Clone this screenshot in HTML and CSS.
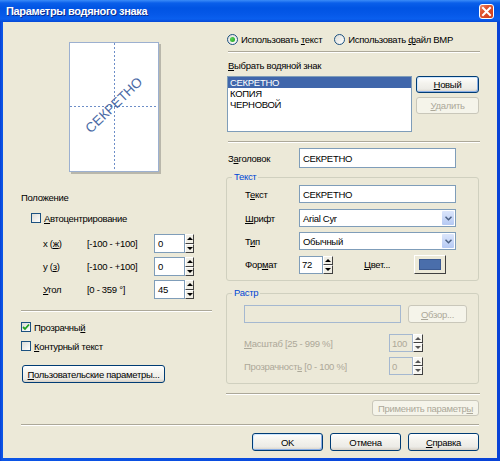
FILE: index.html
```html
<!DOCTYPE html>
<html lang="ru">
<head>
  <meta charset="UTF-8">
  <title>Параметры водяного знака</title>
  <link rel="stylesheet" href="styles.css">
</head>
<body>
  <div class="window">
    <div class="titlebar">
      <span class="title">Параметры водяного знака</span>
      <span class="close">
        <svg width="13" height="13" viewBox="0 0 13 13"><path d="M3 3 L10 10 M10 3 L3 10" stroke="#fff" stroke-width="2" stroke-linecap="square"/></svg>
      </span>
    </div>
    <div class="client">
      <div class="main">
        <div class="left">
          <div class="preview">
            <span class="preview-text">СЕКРЕТНО</span>
          </div>
          <div class="caption">Положение</div>
          <div class="check-row indent"><span class="check"></span><span><u>А</u>втоцентрирование</span></div>
          <div class="field">
            <span>x (<u>ж</u>)</span><span>[-100 - +100]</span>
            <div class="edit">0</div><div class="spin"><span class="up"></span><span class="down"></span></div>
          </div>
          <div class="field">
            <span>y (<u>з</u>)</span><span>[-100 - +100]</span>
            <div class="edit">0</div><div class="spin"><span class="up"></span><span class="down"></span></div>
          </div>
          <div class="field">
            <span><u>У</u>гол</span><span>[0 - 359 °]</span>
            <div class="edit">45</div><div class="spin"><span class="up"></span><span class="down"></span></div>
          </div>
          <div class="sep sep-left"></div>
          <div class="check-row first"><span class="check checked"><svg width="8" height="8" viewBox="0 0 8 8"><path d="M1 4 L3 6 L7 1.5" fill="none" stroke="#21a121" stroke-width="1.8"/></svg></span><span>Прозрачны<u>й</u></span></div>
          <div class="check-row second"><span class="check"></span><span><u>К</u>онтурный текст</span></div>
          <div class="btn btn-custom"><span><u>П</u>ользовательские параметры...</span></div>
        </div>

        <div class="right">
          <div class="radio-row">
            <span class="radio selected"></span><span class="radio-label">Использовать <u>т</u>екст</span>
            <span class="radio"></span><span class="radio-label">Использовать <u>ф</u>айл BMP</span>
          </div>
          <div class="sep sep-right sep-top"></div>
          <div class="list-label"><u>В</u>ыбрать водяной знак</div>
          <div class="list-row">
            <div class="listbox">
              <div class="item active">СЕКРЕТНО</div>
              <div class="item">КОПИЯ</div>
              <div class="item">ЧЕРНОВОЙ</div>
            </div>
            <div class="list-buttons">
              <div class="btn default"><span><u>Н</u>овый</span></div>
              <div class="btn disabled"><span><u>У</u>далить</span></div>
            </div>
          </div>
          <div class="sep sep-right sep-list"></div>
          <div class="row header-row">
            <span class="row-label">З<u>а</u>головок</span>
            <div class="edit wide tall">СЕКРЕТНО</div>
          </div>

          <div class="group group-text">
            <div class="legend">Текст</div>
            <div class="row r1"><span class="row-label short">Т<u>е</u>кст</span><div class="edit wide">СЕКРЕТНО</div></div>
            <div class="row r2"><span class="row-label short"><u>Ш</u>рифт</span>
              <div class="select"><span>Arial Cyr</span><span class="drop"><svg width="7" height="5" viewBox="0 0 7 5"><path d="M0.5 0.8 L3.5 3.8 L6.5 0.8" fill="none" stroke="#4d6185" stroke-width="1.5"/></svg></span></div>
            </div>
            <div class="row r3"><span class="row-label short">Т<u>и</u>п</span>
              <div class="select"><span>Обычный</span><span class="drop"><svg width="7" height="5" viewBox="0 0 7 5"><path d="M0.5 0.8 L3.5 3.8 L6.5 0.8" fill="none" stroke="#4d6185" stroke-width="1.5"/></svg></span></div>
            </div>
            <div class="row r4"><span class="row-label short">Фор<u>м</u>ат</span>
              <div class="edit num">72</div><div class="spin"><span class="up"></span><span class="down"></span></div>
              <span class="color-label"><u>Ц</u>вет...</span>
              <div class="color-btn"><span class="swatch"></span></div>
            </div>
          </div>

          <div class="group group-raster">
            <div class="legend">Растр</div>
            <div class="row r1">
              <div class="edit off path"></div>
              <div class="btn disabled browse"><span><u>О</u>бзор...</span></div>
            </div>
            <div class="row r2 dim"><span class="raster-label"><u>М</u>асштаб [25 - 999 %]</span>
              <div class="edit off num">100</div><div class="spin off"><span class="up"></span><span class="down"></span></div>
            </div>
            <div class="row r3 dim"><span class="raster-label">Прозрачност<u>ь</u> [0 - 100 %]</span>
              <div class="edit off num">0</div><div class="spin off"><span class="up"></span><span class="down"></span></div>
            </div>
          </div>

          <div class="sep sep-right sep-apply"></div>
          <div class="apply-row">
            <div class="btn disabled apply"><span>Применить параметр<u>ы</u></span></div>
          </div>
        </div>
      </div>

      <div class="sep sep-bottom"></div>
      <div class="footer">
        <div class="btn default"><span>OK</span></div>
        <div class="btn"><span>Отмена</span></div>
        <div class="btn"><span><u>С</u>правка</span></div>
      </div>
    </div>
  </div>
</body>
</html>
```

FILE: styles.css
```css
*, *::before, *::after {
  box-sizing: border-box;
}
body {
  margin: 0;
  font-family: "Liberation Sans", Arial, sans-serif;
  font-size: 9.5px;
  letter-spacing: -0.3px;
  color: #000;
}
u {
  text-decoration: underline;
  text-underline-offset: 1px;
}
.window {
  width: 500px;
  height: 461px;
  display: flex;
  flex-direction: column;
  background: linear-gradient(to right, #0a3fd4, #0b55e6 2px, #0842d6);
  overflow: hidden;
}
.titlebar {
  height: 23px;
  display: flex;
  align-items: center;
  justify-content: space-between;
  padding: 0 6px 0 6px;
  background: linear-gradient(to bottom, #3b8cf8 0, #0a5fea 3px, #0054e3 8px, #0558e8 14px, #0a5fee 19px, #0548d6 22px, #0a3fd0 23px);
}
.title {
  color: #fff;
  font-weight: bold;
  font-size: 11px;
  letter-spacing: -0.35px;
  text-shadow: 1px 1px 0 #0a2a8a;
}
.close {
  width: 15px;
  height: 15px;
  border: 1px solid #fff;
  border-radius: 3px;
  display: flex;
  align-items: center;
  justify-content: center;
  background: linear-gradient(135deg, #ec8a6c 0, #e0542f 35%, #cf3b1c 100%);
  margin-top: 1px;
}
.client {
  flex: 1;
  margin: 0 3px 3px 3px;
  background: #ece9d8;
  padding: 11px 17px 7px 18px;
  display: flex;
  flex-direction: column;
}
.main {
  display: grid;
  grid-template-columns: 191px 254px;
  column-gap: 14px;
  align-items: start;
}

/* left column */
.left {
  display: flex;
  flex-direction: column;
}
.preview {
  position: relative;
  width: 90px;
  height: 130px;
  margin: 9px 0 0 48px;
  background: #fff;
  border: 1px solid #9cb0d0;
  box-shadow: 2px 2px 0 #b9b7ab;
  overflow: hidden;
}
.preview::before {
  content: '';
  position: absolute;
  left: 44px;
  top: 0;
  width: 1px;
  height: 100%;
  background: repeating-linear-gradient(to bottom, #6d8ec8 0 2px, transparent 2px 4px);
}
.preview::after {
  content: '';
  position: absolute;
  top: 63px;
  left: 0;
  height: 1px;
  width: 100%;
  background: repeating-linear-gradient(to right, #6d8ec8 0 2px, transparent 2px 4px);
}
.preview-text {
  position: absolute;
  left: 44px;
  top: 62px;
  transform: translate(-50%, -50%) rotate(-44deg);
  font-size: 13.5px;
  letter-spacing: 0;
  color: #4a6aa5;
  white-space: nowrap;
  z-index: 1;
}
.caption {
  margin-top: 20px;
  line-height: 12px;
}
.check-row {
  display: flex;
  align-items: center;
  height: 12px;
  gap: 3px;
}
.check-row.indent {
  margin: 8px 0 0 10px;
}
.check-row.first {
  margin-top: 9px;
}
.check-row.second {
  margin-top: 7px;
}
.check {
  width: 10px;
  height: 10px;
  border: 1px solid #1c5180;
  background: linear-gradient(135deg, #dcdcd7, #fff);
  display: flex;
  align-items: center;
  justify-content: center;
}
.field {
  display: grid;
  grid-template-columns: 44px 67px 31px 9px;
  align-items: center;
  height: 19px;
  margin: 4px 0 0 22px;
}
.check-row.indent + .field {
  margin-top: 10px;
}
.edit {
  height: 18px;
  background: #fff;
  border: 1px solid #7f9db9;
  padding-left: 3px;
  display: flex;
  align-items: center;
}
.field .edit {
  height: 19px;
}
.spin {
  display: flex;
  flex-direction: column;
  width: 9px;
  height: 19px;
}
.spin span {
  flex: 1;
  display: flex;
  align-items: center;
  justify-content: center;
  background: #f1efe6;
  border: 1px solid;
  border-color: #fff #404040 #404040 #fff;
}
.spin .up::after {
  content: '';
  border-left: 3px solid transparent;
  border-right: 3px solid transparent;
  border-bottom: 3px solid #000;
}
.spin .down::after {
  content: '';
  border-left: 3px solid transparent;
  border-right: 3px solid transparent;
  border-top: 3px solid #000;
}
.sep {
  height: 2px;
  border-top: 1px solid #aca899;
  border-bottom: 1px solid #fff;
}
.sep-left {
  margin-top: 11px;
}
.btn {
  height: 18px;
  display: flex;
  align-items: center;
  justify-content: center;
  border: 1px solid #003c74;
  border-radius: 3px;
  background: linear-gradient(to bottom, #fff 0, #f4f3ee 40%, #ecebe6 80%, #d6d0c5 100%);
  white-space: nowrap;
}
.btn.default {
  box-shadow: inset 1px 1px 0 #cee7ff, inset -1px -1px 0 #89ade4;
}
.btn.disabled {
  border-color: #c9c7ba;
  background: #f5f4ea;
  color: #aca899;
}
.btn-custom {
  width: 143px;
  margin: 13px 0 0 1px;
}

/* right column */
.right {
  display: flex;
  flex-direction: column;
}
.radio-row {
  display: flex;
  align-items: center;
  height: 12px;
  margin-left: 1px;
  white-space: nowrap;
}
.radio {
  flex: none;
  width: 11px;
  height: 11px;
  border-radius: 50%;
  border: 1px solid #1c5180;
  background: linear-gradient(135deg, #dcdcd7, #fff);
  display: flex;
  align-items: center;
  justify-content: center;
}
.radio.selected::after {
  content: '';
  width: 5px;
  height: 5px;
  border-radius: 50%;
  background: radial-gradient(circle at 35% 35%, #55d155, #21a121);
}
.radio-label {
  margin: 0 12px 0 3px;
}
.sep-right {
  margin-left: 2px;
}
.sep-top {
  margin-top: 6px;
}
.list-label {
  margin: 7px 0 0 2px;
  line-height: 12px;
}
.list-row {
  display: flex;
  gap: 4px;
  margin: 4px 0 0 1px;
}
.listbox {
  width: 185px;
  height: 56px;
  background: #fff;
  border: 1px solid #7f9db9;
}
.item {
  line-height: 11px;
  padding-left: 2px;
}
.item.active {
  background: #4066ab;
  color: #fff;
}
.list-buttons {
  display: flex;
  flex-direction: column;
  gap: 4px;
  width: 63px;
}
.list-buttons .btn {
  height: 17px;
}
.sep-list {
  margin-top: 9px;
}
.row {
  display: flex;
  align-items: center;
  white-space: nowrap;
}
.row-label {
  width: 71px;
}
.row-label.short {
  width: 54px;
}
.header-row {
  margin: 5px 0 0 2px;
}
.edit.wide {
  width: 157px;
}
.edit.tall {
  height: 20px;
}
.group {
  border: 1px solid #d0d0bf;
  border-radius: 3px;
  width: 253px;
}
.legend {
  width: fit-content;
  height: 12px;
  line-height: 12px;
  margin-top: -7px;
  padding: 0 2px;
  background: #ece9d8;
  color: #0046d5;
}
.group-text {
  margin-top: 9px;
  padding: 0 0 6px 18px;
}
.group-text .legend {
  margin-left: -13px;
}
.group-text .r1 { margin-top: 2px; }
.group-text .r2 { margin-top: 6px; }
.group-text .r3 { margin-top: 5px; }
.group-text .r4 { margin-top: 5px; }
.select {
  width: 157px;
  height: 18px;
  background: #fff;
  border: 1px solid #7f9db9;
  display: flex;
  align-items: center;
  justify-content: space-between;
  padding: 1px 1px 1px 3px;
}
.drop {
  width: 12px;
  height: 100%;
  display: flex;
  align-items: center;
  justify-content: center;
  background: linear-gradient(to bottom, #dce6fb, #b5c9f3);
  border-radius: 1px;
}
.edit.num {
  width: 24px;
  padding-left: 2px;
}
.row .spin {
  height: 18px;
  width: 10px;
}
.color-label {
  margin-left: 31px;
}
.color-btn {
  margin-left: 24px;
  width: 32px;
  height: 19px;
  border: 1px solid;
  border-color: #fff #404040 #404040 #fff;
  background: #ece9d8;
  display: flex;
  align-items: center;
  justify-content: center;
}
.swatch {
  width: 22px;
  height: 11px;
  background: #4a6eab;
  border: 1px solid #3b5a92;
}
.group-raster {
  margin-top: 12px;
  padding: 0 0 8px 17px;
}
.group-raster .legend {
  margin-left: -12px;
}
.group-raster .r1 { margin-top: 6px; }
.group-raster .r2 { margin-top: 11px; }
.group-raster .r3 { margin-top: 5px; }
.edit.off {
  background: #ece9d8;
  border-color: #a5b8d0;
  color: #aca899;
}
.edit.path {
  width: 157px;
}
.browse {
  width: 59px;
  margin-left: 7px;
}
.dim {
  color: #aca899;
}
.raster-label {
  width: 145px;
}
.spin.off span {
  background: #f8f7f2;
}
.spin.off .up::after,
.spin.off .down::after {
  border-bottom-color: #555;
  border-top-color: #555;
}
.sep-apply {
  margin-top: 9px;
  margin-left: 0;
}
.apply-row {
  display: flex;
  justify-content: flex-end;
  margin-top: 5px;
  padding-right: 1px;
}
.apply {
  width: 107px;
  height: 16px;
}

/* bottom */
.sep-bottom {
  margin-top: 8px;
  margin-right: 1px;
}
.footer {
  display: flex;
  justify-content: flex-end;
  gap: 7px;
  margin-top: 7px;
  padding-right: 1px;
}
.footer .btn {
  width: 71px;
}
```
